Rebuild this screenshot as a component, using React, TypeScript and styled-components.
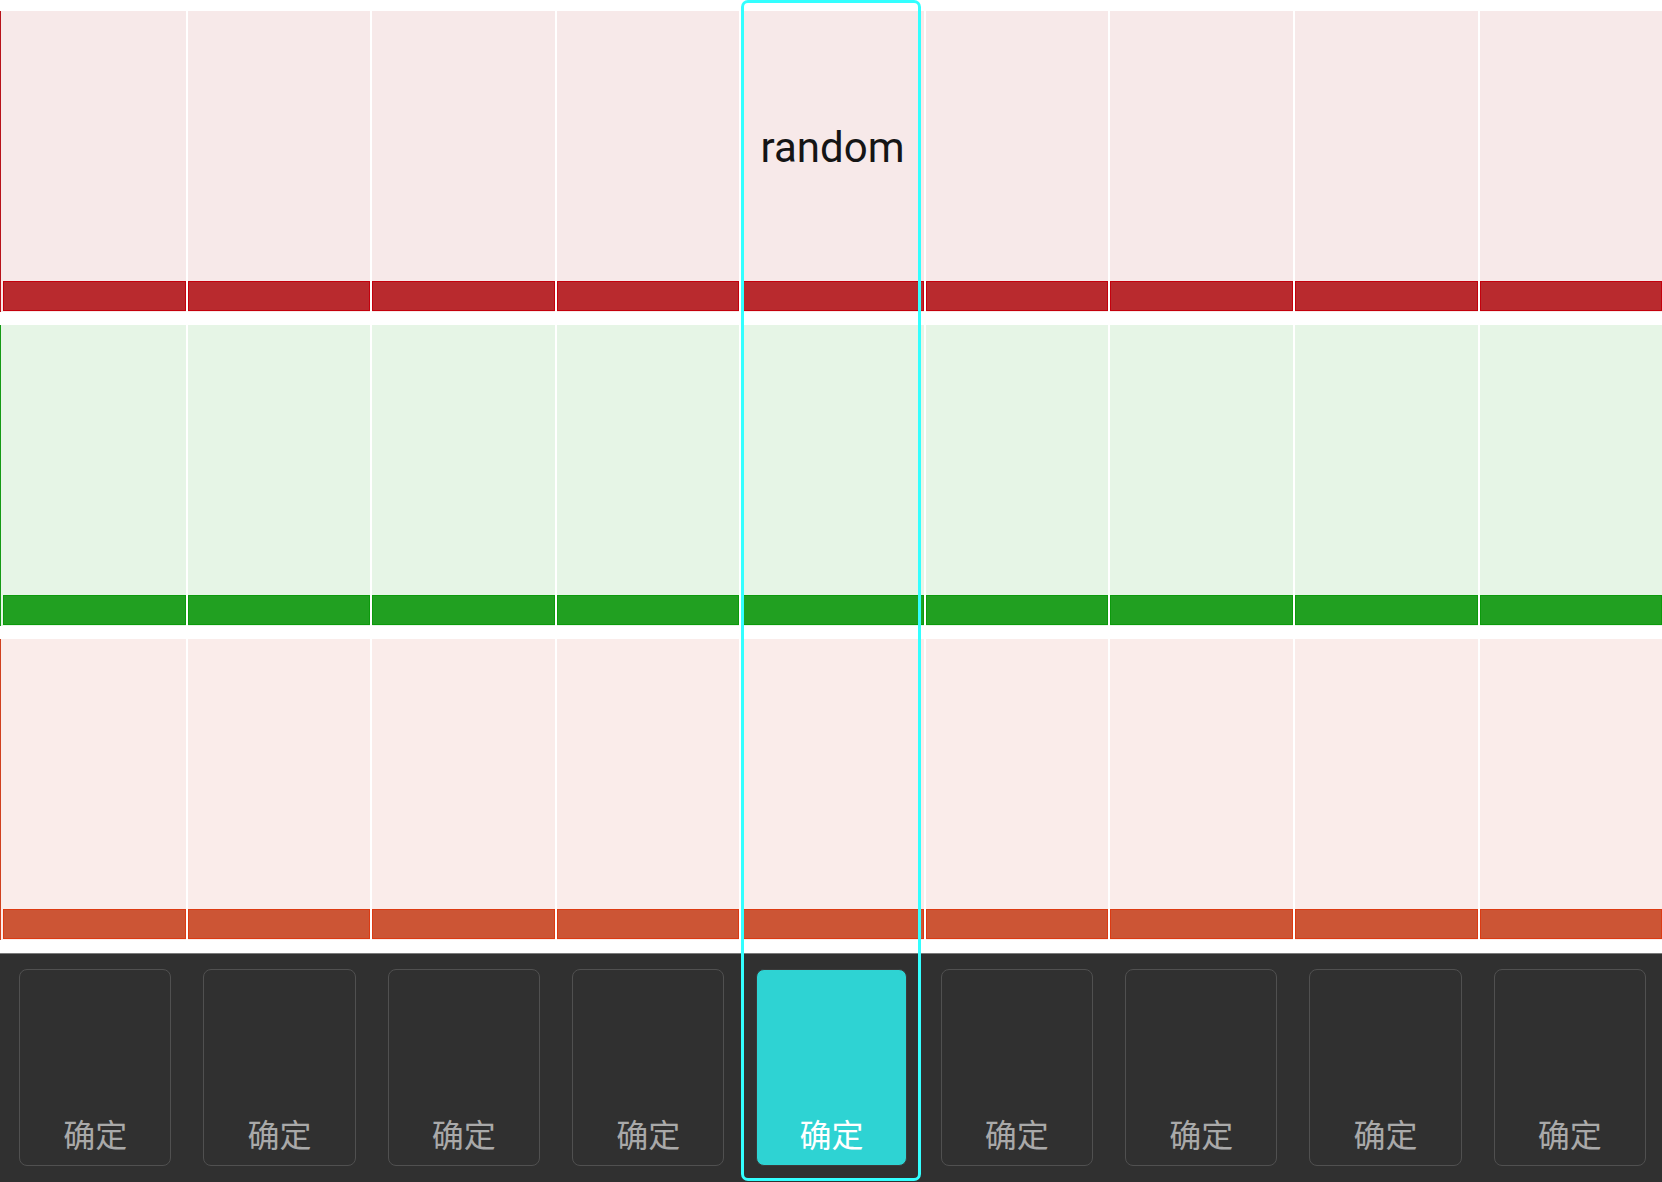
import React from "react";
import styled, { createGlobalStyle } from "styled-components";

const GlobalStyle = createGlobalStyle`
  html, body { margin: 0; padding: 0; background: #ffffff; }
  * { box-sizing: border-box; }
`;

type Tone = { pale: string; line: string; bar: string; barEdge: string };

const tones: Tone[] = [
  { pale: "#f7e9e9", line: "#b8121a", bar: "#b92a2e", barEdge: "#c4000c" },
  { pale: "#e6f5e6", line: "#159a15", bar: "#21a021", barEdge: "#0c9a0c" },
  { pale: "#faecea", line: "#d0401e", bar: "#cc5535", barEdge: "#dc3a12" },
];

const COLS = 9;
const ACTIVE = 4;

const Page = styled.div`
  position: relative;
  width: 100%;
  height: 1182px;
  padding-top: 11px;
  display: flex;
  flex-direction: column;
  background: #ffffff;
  overflow: hidden;
`;

const Tracks = styled.div`
  display: flex;
  flex-direction: column;
  gap: 13px;
`;

const Track = styled.div<{ $tone: Tone }>`
  display: flex;
  height: 301px;
  background: ${(p) => p.$tone.pale};
  border-left: 1px solid ${(p) => p.$tone.line};
  padding-left: 2px;
`;

const Cell = styled.div<{ $tone: Tone }>`
  flex: 1 1 0;
  min-width: 0;
  display: flex;
  flex-direction: column;
  background: ${(p) => p.$tone.pale};
  & + & {
    border-left: 2px solid #ffffff;
  }
`;

const Label = styled.div`
  flex: 1;
  padding-top: 116px;
  text-align: center;
  font-family: Roboto, "Liberation Sans", sans-serif;
  font-size: 42px;
  line-height: 1;
  color: #151515;
`;

const Bar = styled.div<{ $tone: Tone }>`
  height: 30px;
  margin-bottom: 1px;
  background: ${(p) => p.$tone.bar};
  border: 1px solid ${(p) => p.$tone.barEdge};
`;

const Panel = styled.div`
  margin-top: 13px;
  flex: 1;
  border-top: 1px solid #7a7a7a;
  background: #303030;
  display: grid;
  grid-template-columns: repeat(${COLS}, 1fr);
  padding: 15px 0 16px 3px;
`;

const Slot = styled.div`
  display: flex;
  padding: 0 16px;
`;

const Key = styled.div<{ $active: boolean }>`
  flex: 1;
  display: flex;
  flex-direction: column;
  justify-content: flex-end;
  align-items: center;
  margin-right: ${(p) => (p.$active ? "2px" : "0")};
  padding-bottom: 16px;
  border-radius: 8px;
  border: 1px solid ${(p) => (p.$active ? "#3a3a3a" : "#505050")};
  background: ${(p) => (p.$active ? "#2ed3d3" : "#303030")};
  color: ${(p) => (p.$active ? "#ffffff" : "#a9a9a9")};
  font-family: "Noto Sans CJK SC", "Noto Sans", sans-serif;
  font-size: 32px;
  line-height: 1;
`;

const Focus = styled.div`
  position: absolute;
  top: 0;
  bottom: 1px;
  left: calc(${(ACTIVE * 100) / COLS}% + 2px);
  width: calc(${100 / COLS}% - 4px);
  border: 3px solid #33ffff;
  border-radius: 7px;
  pointer-events: none;
`;

export default function App() {
  const cols = Array.from({ length: COLS }, (_, i) => i);
  return (
    <>
      <GlobalStyle />
      <Page>
        <Tracks>
          {tones.map((tone, r) => (
            <Track key={r} $tone={tone}>
              {cols.map((c) => (
                <Cell key={c} $tone={tone}>
                  <Label>{r === 0 && c === ACTIVE ? "random" : ""}</Label>
                  <Bar $tone={tone} />
                </Cell>
              ))}
            </Track>
          ))}
        </Tracks>
        <Panel>
          {cols.map((c) => (
            <Slot key={c}>
              <Key $active={c === ACTIVE}>确定</Key>
            </Slot>
          ))}
        </Panel>
        <Focus />
      </Page>
    </>
  );
}
